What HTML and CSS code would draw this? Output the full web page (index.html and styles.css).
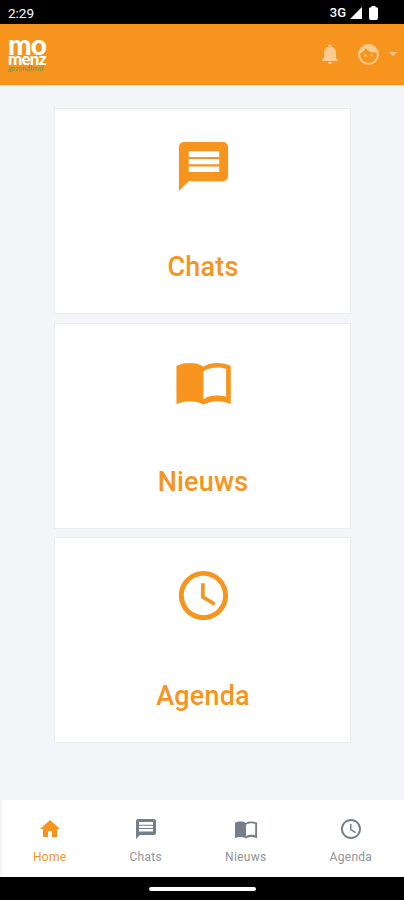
FILE: index.html
```html
<!DOCTYPE html>
<html lang="nl">
<head>
  <meta charset="UTF-8" />
  <meta name="viewport" content="width=device-width, initial-scale=1.0"/>
  <title>Momenz</title>
  <link rel="stylesheet" href="styles.css">
</head>
<body>

  <svg class="sprite" aria-hidden="true">
    <symbol id="chat" viewBox="0 0 24 24">
      <path d="M20 2H4c-1.100 0-2 .9-2 2v18l4-4h14c1.100 0 2-.9 2-2V4c0-1.100-.9-2-2-2zM6 5.800h12.400v2.300H6zM6 8.900h12.400v2.200H6zM6 12h12.400v2.200H6z" fill-rule="evenodd"/>
    </symbol>
    <symbol id="chat-line" viewBox="0 0 24 24">
      <path d="M20 2H4c-1.100 0-2 .9-2 2v18l4-4h14c1.100 0 2-.9 2-2V4c0-1.100-.9-2-2-2zM5 5h14v2.700H5zM5 8.700h14v2.200H5zM5 11.900h14v2.500H5z" fill-rule="evenodd"/>
    </symbol>
    <symbol id="book" viewBox="0 0 24 24">
      <path d="M12 6C10.500 4.900 8.500 4.500 6.500 4.500S2.400 4.900 1 5.700V21.200C2.500 20.500 4.300 20 6.500 20s4 .5 5.500 1.500c1.500-1 3.500-1.500 5.500-1.500s4 .5 5.600 1.200V5.700C21.700 4.900 19.500 4.500 17.500 4.500S13.500 4.900 12 6zm9.200 12.200c-1.200-.4-2.500-.5-3.700-.5-1.900 0-4.100.4-5.500 1.500V7.800c1.500-1 3.600-1.500 5.500-1.500 1.200 0 2.500.2 3.700.6v11.300z"/>
    </symbol>
    <symbol id="clock" viewBox="0 0 24 24">
      <path d="M12 2C6.500 2 2 6.500 2 12s4.500 10 10 10 10-4.500 10-10S17.500 2 12 2zm0 18c-4.400 0-8-3.600-8-8s3.600-8 8-8 8 3.600 8 8-3.600 8-8 8zm.5-13H11v6l5.200 3.200.8-1.300-4.500-2.700V7z"/>
    </symbol>
    <symbol id="home" viewBox="0 0 24 24">
      <path d="M10 20v-6h4v6h5v-8h3L12 3 2 12h3v8z"/>
    </symbol>
  </svg>

  <div class="statusbar">
    <span class="time">2:29</span>
    <div class="signals">
      <span>3G</span>
      <svg width="12" height="12" viewBox="0 0 12 12"><path d="M12 0v12H0z"/></svg>
      <svg class="battery" width="9" height="14" viewBox="0 0 9 14"><path d="M2.500 0h4v1.200H7.500q1.500 0 1.500 1.500V12q0 2-2 2H2q-2 0-2-2V2.700q0-1.500 1.500-1.500h1z"/></svg>
    </div>
  </div>

  <header class="topbar">
    <div class="logo">
      <span class="logo-mo">mo</span>
      <span class="logo-menz">menz</span>
      <span class="logo-sub">gezondheid</span>
    </div>
    <div class="actions">
      <svg class="bell" width="24" height="24" viewBox="0 0 24 24"><path d="M12 22c1.100 0 2-.9 2-2h-4c0 1.100.9 2 2 2zm6-6v-5c0-3.100-1.600-5.600-4.500-6.300V4c0-.8-.7-1.500-1.500-1.500s-1.500.7-1.500 1.500v.7C7.600 5.400 6 7.900 6 11v5l-2 2v1h16v-1l-2-2z"/></svg>
      <svg class="face" width="25" height="25" viewBox="0 0 24 24"><path d="M9 11.750a1.250 1.250 0 1 0 0 2.500 1.250 1.250 0 0 0 0-2.500zm6 0a1.250 1.250 0 1 0 0 2.500 1.250 1.250 0 0 0 0-2.500zM12 2a10 10 0 1 0 0 20 10 10 0 0 0 0-20zm0 18c-4.410 0-8-3.590-8-8 0-.29.020-.58.050-.86 2.360-1.050 4.230-2.980 5.210-5.370a9.970 9.970 0 0 0 10.410 3.970c.21.710.33 1.470.33 2.260 0 4.410-3.590 8-8 8z"/></svg>
      <svg width="8" height="4" viewBox="0 0 8 4"><path d="M0 0h8L4 4z"/></svg>
    </div>
  </header>

  <main class="cards">
    <a class="card"><svg><use href="#chat"/></svg><span>Chats</span></a>
    <a class="card"><svg><use href="#book"/></svg><span>Nieuws</span></a>
    <a class="card"><svg><use href="#clock"/></svg><span>Agenda</span></a>
  </main>

  <nav class="tabs">
    <a class="tab active"><svg><use href="#home"/></svg><span>Home</span></a>
    <a class="tab"><svg><use href="#chat-line"/></svg><span>Chats</span></a>
    <a class="tab"><svg><use href="#book"/></svg><span>Nieuws</span></a>
    <a class="tab"><svg><use href="#clock"/></svg><span>Agenda</span></a>
  </nav>

  <div class="gesture"><div class="pill"></div></div>

</body>
</html>
```
FILE: styles.css
```css
* { box-sizing: border-box; }
body {
  margin: 0;
  height: 900px;
  display: flex;
  flex-direction: column;
  font-family: Roboto, sans-serif;
  background: #f3f5f8;
  overflow: hidden;
}
svg {
  display: block;
  fill: currentColor;
}
.sprite { display: none; }

.statusbar {
  height: 24px;
  padding: 1px 26px 0 8px;
  display: flex;
  align-items: center;
  justify-content: space-between;
  background: #000;
  color: #fff;
  font-size: 13px;
}
.time { font-size: 13.5px; }
.signals {
  display: flex;
  align-items: center;
  gap: 4px;
  font-weight: 500;
}
.battery { margin-left: 3px; }

.topbar {
  height: 61px;
  padding: 0 7px 0 8px;
  display: flex;
  justify-content: space-between;
  background: #f7941d;
  border-bottom: 1px solid #f58a0b;
}
.logo {
  padding-top: 11px;
  display: flex;
  flex-direction: column;
  font-family: Lato, sans-serif;
  font-weight: 900;
  color: #fff;
}
.logo-mo {
  font-size: 28px;
  line-height: 19px;
  letter-spacing: -0.8px;
}
.logo-menz {
  font-size: 17px;
  line-height: 10px;
  letter-spacing: -0.8px;
}
.logo-sub {
  margin-top: 1px;
  font-size: 7.5px;
  line-height: 7px;
  font-style: italic;
  font-weight: 400;
  color: #6f9a4a;
}
.actions {
  display: flex;
  align-items: center;
  color: #fccb90;
}
.face { margin: 0 8px 0 14px; }

.cards {
  flex: 1;
  padding: 23px 0 0 1px;
  display: flex;
  flex-direction: column;
  align-items: center;
  gap: 8.5px;
}
.card {
  width: 297px;
  height: 206px;
  padding: 28px 0 0 1px;
  display: flex;
  flex-direction: column;
  align-items: center;
  background: #fff;
  border: 1px solid #e9ebed;
  color: #f7941d;
  font-size: 27px;
  font-weight: 500;
}
.card svg {
  width: 59px;
  height: 59px;
}
.card span {
  margin-top: 55px;
  line-height: 32px;
  letter-spacing: 0.2px;
}

.tabs {
  height: 77px;
  margin-left: 2px;
  padding: 17px 0 0 31px;
  display: flex;
  gap: 63px;
  background: #fff;
}
.tab {
  display: flex;
  flex-direction: column;
  align-items: center;
  color: #757f89;
  font-size: 12px;
  letter-spacing: 0.3px;
}
.tab svg {
  width: 24px;
  height: 24px;
}
.tab span {
  margin-top: 8px;
  line-height: 16px;
  color: #909498;
}
.tab.active,
.tab.active span { color: #f7941d; }

.gesture {
  height: 23px;
  display: flex;
  align-items: center;
  justify-content: center;
  background: #000;
}
.pill {
  width: 107px;
  height: 4px;
  border-radius: 2px;
  background: #fff;
}
```
